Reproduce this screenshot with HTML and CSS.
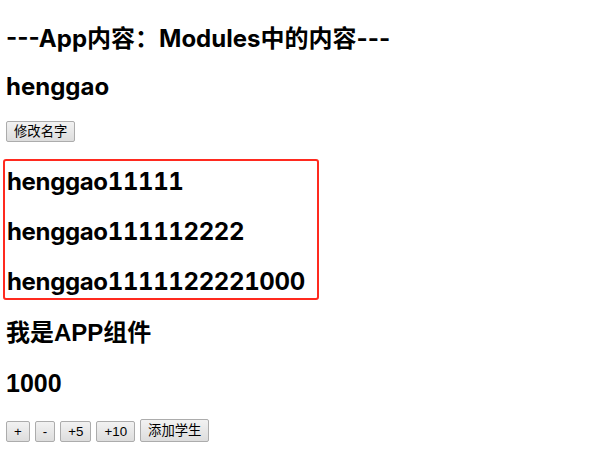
FILE: index.html
```html
<!DOCTYPE html>
<html lang="zh-CN">
<head>
<meta charset="utf-8">
<title>App</title>
<link rel="stylesheet" href="styles.css">
</head>
<body>
<div class="app">
  <h2 class="title">---App内容：Modules中的内容---</h2>
  <h2 class="title">henggao</h2>
  <div class="row"><button class="btn">修改名字</button></div>
  <div class="box">
    <h2 class="box-item">henggao11111</h2>
    <h2 class="box-item">henggao111112222</h2>
    <h2 class="box-item">henggao1111122221000</h2>
  </div>
  <h2 class="app-title">我是APP组件</h2>
  <h2 class="count">1000</h2>
  <div class="row buttons">
    <button class="btn">+</button>
    <button class="btn">-</button>
    <button class="btn">+5</button>
    <button class="btn">+10</button>
    <button class="btn btn-tall">添加学生</button>
  </div>
</div>
</body>
</html>
```

FILE: styles.css
```css
html, body {
  margin: 0;
  padding: 0;
  background: #ffffff;
  color: #000000;
}

.app {
  padding: 25px 6px 0 6px;
  font-family: "Liberation Sans", "Noto Sans CJK SC", sans-serif;
}

h2 {
  font-size: 24px;
  font-weight: bold;
  margin: 0;
}

.title {
  font-family: "Inter", "Noto Sans CJK SC", sans-serif;
  line-height: 28px;
  margin-bottom: 20px;
}

.row {
  display: flex;
  align-items: flex-end;
  gap: 5px;
}

.btn {
  box-sizing: border-box;
  height: 21px;
  font-family: "Liberation Sans", "Noto Sans CJK SC", sans-serif;
  font-size: 13.33px;
  line-height: 15px;
  color: #000000;
  padding: 2px 7px;
  border: 1px solid #acacac;
  border-radius: 2px;
  background: linear-gradient(#f2f2f2, #dddddd);
}

.btn-tall {
  height: 23px;
  padding: 3px 7px;
}

.box {
  box-sizing: border-box;
  width: 316px;
  margin: 17px 0 0 -3px;
  padding: 6px 0 1px 2px;
  border: 2px solid #ff2a1f;
  border-radius: 3px;
  display: flex;
  flex-direction: column;
  gap: 20px;
}

.box-item {
  font-family: "Inter", "Noto Sans CJK SC", sans-serif;
  font-variant-numeric: tabular-nums;
  letter-spacing: -0.35px;
  line-height: 30px;
}

.app-title {
  margin-top: 17px;
  line-height: 32px;
}

.count {
  font-size: 25px;
  margin-top: 20px;
  line-height: 28px;
  margin-bottom: 22px;
}
```
